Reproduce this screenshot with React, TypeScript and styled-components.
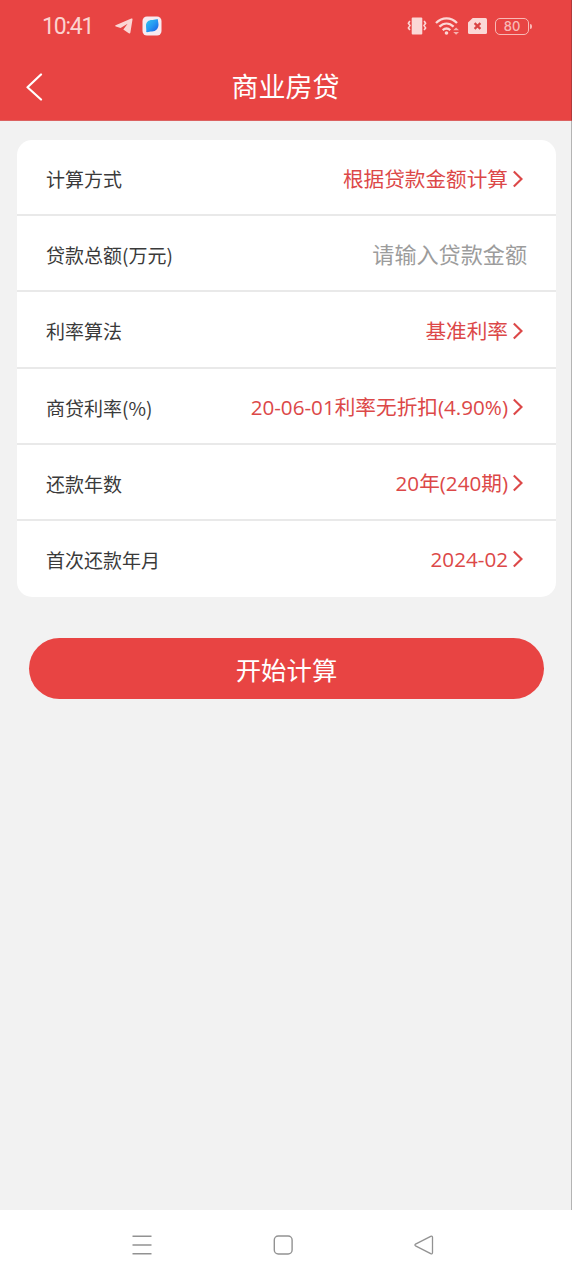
import React from "react";
import styled, { createGlobalStyle } from "styled-components";

const GlobalStyle = createGlobalStyle`
  *, *::before, *::after { box-sizing: border-box; }
  body {
    margin: 0;
    background: #f2f2f2;
    font-family: "Open Sans", "Noto Sans CJK SC", sans-serif;
  }
`;

const Screen = styled.div`
  width: 572px;
  height: 1280px;
  display: flex;
  flex-direction: column;
  background: #f2f2f2;
`;

const Body = styled.div`
  flex: 1;
  display: flex;
  flex-direction: column;
  border-right: 1px solid #b4b4b4;
`;

const Header = styled.header`
  height: 121px;
  background: #e84443;
  border-right: 1px solid #b23a3a;
  border-bottom: 1px solid #dc6261;
  color: #fff;
`;

const StatusBar = styled.div`
  height: 52px;
  padding: 0 42px 0 42px;
  display: flex;
  align-items: center;
  justify-content: space-between;
`;

const StatusGroup = styled.div<{ $gap: number }>`
  display: flex;
  align-items: center;
  gap: ${(p) => p.$gap}px;
`;

const Clock = styled.span`
  width: 73px;
  padding-top: 1px;
  font-family: Roboto, sans-serif;
  font-size: 23px;
  line-height: 51px;
  letter-spacing: -1.2px;
  color: #fbd3d0;
`;

const TitleBar = styled.div`
  height: 68px;
  padding: 1px 25px 0;
  display: grid;
  grid-template-columns: 40px 1fr 40px;
  align-items: center;
`;

const BackButton = styled.button`
  display: flex;
  padding: 0;
  border: 0;
  background: none;
  color: #fff;
`;

const Title = styled.h1`
  margin: 0;
  font-size: 27px;
  line-height: 67px;
  font-weight: 400;
  text-align: center;
`;

const Card = styled.section`
  margin: 19px 15px 0 17px;
  height: 457px;
  display: flex;
  flex-direction: column;
  background: #fff;
  border-radius: 15px;
  overflow: hidden;
`;

const Row = styled.div`
  flex: 1;
  padding: 3px 33px 0 29px;
  display: flex;
  align-items: center;
  justify-content: space-between;
  border-bottom: 2px solid #e9e9e9;

  &:last-child {
    border-bottom-color: transparent;
  }
`;

const Label = styled.span`
  padding-top: 1px;
  font-family: "Noto Sans CJK SC", sans-serif;
  font-size: 19px;
  line-height: 30px;
  color: #3a3a3a;
`;

const Value = styled.span`
  display: flex;
  align-items: center;
  gap: 4px;
  font-size: 20.65px;
  line-height: 30px;
  color: #dc4848;
`;

const AmountInput = styled.input`
  width: 200px;
  height: 36px;
  margin: 0 -4px 1px 0;
  padding: 0;
  border: 0;
  outline: 0;
  background: none;
  font: inherit;
  font-size: 22.1px;
  text-align: right;

  &::placeholder {
    color: #9c9c9c;
    opacity: 1;
  }
`;

const SubmitButton = styled.button`
  height: 61px;
  margin: 41px 27px 0 29px;
  padding: 0;
  border: 0;
  border-radius: 31px;
  background: #e84443;
  color: #fff;
  font: inherit;
  font-size: 25.4px;
`;

const NavBar = styled.nav`
  height: 70px;
  padding: 0 138px 0 132px;
  display: flex;
  align-items: center;
  justify-content: space-between;
  background: #fff;
`;

const TelegramIcon = () => (
  <svg width="18" height="16" viewBox="0 0 18 16">
    <path d="M.6 7.3 16.300.5c.9-.3 1.400.2 1.200 1L15.400 14.500c-.2 1-.8 1.400-1.600.8L8.300 11.500 12.600 5.800 5.600 9.900.9 8.500c-.8-.3-.9-.8-.3-1.200Z" fill="#fbd6d4" />
  </svg>
);

const AppIcon = () => (
  <svg width="20" height="20" viewBox="0 0 20 20">
    <defs>
      <linearGradient id="globe" x1="0" y1="0" x2="1" y2="1">
        <stop offset="0" stopColor="#35c4ee" />
        <stop offset="0.5" stopColor="#2598f2" />
        <stop offset="1" stopColor="#1957e4" />
      </linearGradient>
    </defs>
    <rect x=".5" y=".5" width="19" height="19" rx="4.5" fill="#f7eaf0" />
    <path d="M4 9.500C4 5.800 7 3.700 10.400 4c1.800.1 3.300-.7 5.600-.7-.3 1.400.5 3 .5 5.200 0 4-2.700 7-6.500 7-2 0-3.500.8-5.800.6.4-2-.2-3.800-.2-6.600Z" fill="url(#globe)" />
  </svg>
);

const VibrateIcon = () => (
  <svg width="20" height="18" viewBox="0 0 20 18">
    <rect x="4.7" y=".5" width="10.6" height="17" rx="1" fill="#fbd8d6" />
    <path d="m2.900 4-1.500 2.300L3 8.600l-1.600 2.300L2.900 13M17.100 4l1.500 2.300L17 8.600l1.600 2.300-1.500 2.100" fill="none" stroke="#fbd8d6" strokeWidth="1.600" />
  </svg>
);

const WifiIcon = () => (
  <svg width="25" height="19" viewBox="0 0 25 19">
    <g fill="none" stroke="#fbd8d6" strokeWidth="2.3">
      <path d="M1 6c6.200-6.200 14.800-6.200 21 0" />
      <path d="M4.400 9.700c4.400-4.200 9.800-4.200 14.200 0" />
      <path d="M7.700 13.100c2.500-2.100 5.100-2.100 7.600 0" />
    </g>
    <circle cx="11.500" cy="16" r="1.800" fill="#fbd8d6" />
    <path d="m18.200 13.200 2.900-2.800 2.900 2.800ZM18.200 15l2.900 2.800 2.900-2.800Z" fill="#f6b1ae" />
  </svg>
);

const SimIcon = () => (
  <svg width="19" height="16" viewBox="0 0 19 16">
    <path d="M4.700 0H17.500Q19 0 19 1.500v13Q19 16 17.500 16h-16Q0 16 0 14.500V4.500Z" fill="#fbd8d6" />
    <path d="m6.600 5.100 5.800 5.800m0-5.800-5.800 5.800" stroke="#d94343" strokeWidth="2.200" />
  </svg>
);

const BatteryShell = styled.div`
  position: relative;
  width: 34px;
  height: 17px;
  border: 1.500px solid #f8b9b6;
  border-radius: 5px;
  font-family: Inter, sans-serif;
  font-size: 13px;
  font-weight: 500;
  line-height: 15px;
  text-align: center;
  color: #f8b9b6;

  &::after {
    content: "";
    position: absolute;
    top: 5px;
    right: -4px;
    width: 2px;
    height: 5px;
    border-radius: 0 2px 2px 0;
    background: #f8b9b6;
  }
`;

const ChevronIcon = () => (
  <svg width="11" height="18" viewBox="0 0 11 18">
    <path d="m1.800 1.500 7.700 7.500-7.700 7.500" fill="none" stroke="currentColor" strokeWidth="2.100" />
  </svg>
);

const BackIcon = () => (
  <svg width="18" height="28" viewBox="0 0 18 28">
    <path d="M16 1.500 2.500 14.300 16 26.500" fill="none" stroke="currentColor" strokeWidth="2.200" strokeLinecap="round" strokeLinejoin="round" />
  </svg>
);

const MenuIcon = () => (
  <svg width="20" height="20" viewBox="0 0 20 20">
    <path d="M.5 1.200h19M.5 10h19M.5 18.700h19" stroke="#929292" strokeWidth="1.400" />
  </svg>
);

const HomeIcon = () => (
  <svg width="20" height="20" viewBox="0 0 20 20">
    <rect x="1.300" y="1" width="17.800" height="18" rx="4" fill="none" stroke="#929292" strokeWidth="1.400" />
  </svg>
);

const NavBackIcon = () => (
  <svg width="20" height="20" viewBox="0 0 20 20">
    <path d="M1.500 9.100 16.700 1.300q1.800-.700 1.800 1v15.300q0 1.700-1.800 1L1.500 10.800q-1.100-.800 0-1.700Z" fill="none" stroke="#929292" strokeWidth="1.300" strokeLinejoin="round" />
  </svg>
);

type Field = { label: string; value?: string; placeholder?: string };

const fields: Field[] = [
  { label: "计算方式", value: "根据贷款金额计算" },
  { label: "贷款总额(万元)", placeholder: "请输入贷款金额" },
  { label: "利率算法", value: "基准利率" },
  { label: "商贷利率(%)", value: "20-06-01利率无折扣(4.90%)" },
  { label: "还款年数", value: "20年(240期)" },
  { label: "首次还款年月", value: "2024-02" },
];

export default function App() {
  return (
    <Screen>
      <GlobalStyle />
      <Header>
        <StatusBar>
          <StatusGroup $gap={0}>
            <Clock>10:41</Clock>
            <StatusGroup $gap={9}>
              <TelegramIcon />
              <AppIcon />
            </StatusGroup>
          </StatusGroup>
          <StatusGroup $gap={8}>
            <VibrateIcon />
            <WifiIcon />
            <SimIcon />
            <BatteryShell>80</BatteryShell>
          </StatusGroup>
        </StatusBar>
        <TitleBar>
          <BackButton aria-label="返回">
            <BackIcon />
          </BackButton>
          <Title>商业房贷</Title>
        </TitleBar>
      </Header>
      <Body>
        <Card>
          {fields.map((f) => (
            <Row key={f.label}>
              <Label>{f.label}</Label>
              {f.value ? (
                <Value>
                  {f.value}
                  <ChevronIcon />
                </Value>
              ) : (
                <AmountInput placeholder={f.placeholder} />
              )}
            </Row>
          ))}
        </Card>
        <SubmitButton>开始计算</SubmitButton>
      </Body>
      <NavBar>
        <MenuIcon />
        <HomeIcon />
        <NavBackIcon />
      </NavBar>
    </Screen>
  );
}
